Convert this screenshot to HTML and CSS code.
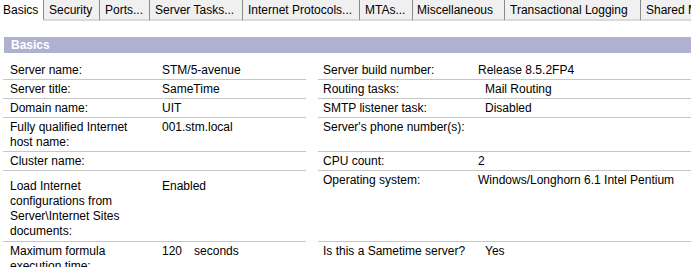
FILE: index.html
```html
<!DOCTYPE html>
<html lang="en">
<head>
    <meta charset="UTF-8">
    <title>Server Document</title>
    <link rel="stylesheet" href="styles.css">
</head>
<body>
    <div class="tabs">
        <div class="tab active tab-basics">Basics</div>
        <div class="tab tab-security">Security</div>
        <div class="tab tab-ports">Ports...</div>
        <div class="tab tab-tasks">Server Tasks...</div>
        <div class="tab tab-protocols">Internet Protocols...</div>
        <div class="tab tab-mtas">MTAs...</div>
        <div class="tab tab-misc">Miscellaneous</div>
        <div class="tab tab-logging">Transactional Logging</div>
        <div class="tab tab-shared">Shared Mail</div>
    </div>

    <div class="section-title">Basics</div>

    <div class="fields">
        <div class="row">
            <div class="half left">
                <div class="label">Server name:</div>
                <div class="value">STM/5-avenue</div>
            </div>
            <div class="half right">
                <div class="label">Server build number:</div>
                <div class="value">Release 8.5.2FP4</div>
            </div>
        </div>
        <div class="row">
            <div class="half left">
                <div class="label">Server title:</div>
                <div class="value">SameTime</div>
            </div>
            <div class="half right">
                <div class="label">Routing tasks:</div>
                <div class="value indent">Mail Routing</div>
            </div>
        </div>
        <div class="row">
            <div class="half left">
                <div class="label">Domain name:</div>
                <div class="value">UIT</div>
            </div>
            <div class="half right">
                <div class="label">SMTP listener task:</div>
                <div class="value indent">Disabled</div>
            </div>
        </div>
        <div class="row">
            <div class="half left">
                <div class="label">Fully qualified Internet host name:</div>
                <div class="value">001.stm.local</div>
            </div>
            <div class="half right">
                <div class="label">Server's phone number(s):</div>
                <div class="value"></div>
            </div>
        </div>
        <div class="row">
            <div class="half left">
                <div class="label">Cluster name:</div>
                <div class="value"></div>
            </div>
            <div class="half right">
                <div class="label">CPU count:</div>
                <div class="value">2</div>
            </div>
        </div>
        <div class="row">
            <div class="half left tall">
                <div class="label">Load Internet configurations from Server\Internet Sites documents:</div>
                <div class="value">Enabled</div>
            </div>
            <div class="half right">
                <div class="label">Operating system:</div>
                <div class="value">Windows/Longhorn 6.1 Intel Pentium</div>
            </div>
        </div>
        <div class="row">
            <div class="half left">
                <div class="label">Maximum formula execution time:</div>
                <div class="value"><span class="number">120</span>seconds</div>
            </div>
            <div class="half right">
                <div class="label">Is this a Sametime server?</div>
                <div class="value indent">Yes</div>
            </div>
        </div>
    </div>
</body>
</html>
```

FILE: styles.css
```css
* {
    box-sizing: border-box;
}

body {
    margin: 0;
    font-family: "Liberation Sans", Arial, sans-serif;
    font-size: 12px;
    color: #000;
    background-color: #fff;
    overflow: hidden;
}

/* tab strip */
.tabs {
    display: flex;
    height: 21px;
    white-space: nowrap;
    overflow: hidden;
}

.tab {
    flex: none;
    height: 21px;
    padding: 1px 0 0 5px;
    line-height: 18px;
    background-color: #f0f0f0;
    border-right: 1px solid #8a8a8a;
    border-bottom: 2px solid #dadada;
    overflow: hidden;
}

.tab.active {
    background-color: #fff;
    border-bottom-color: #fff;
    padding-left: 3px;
}

.tab-basics { width: 44px; }
.tab-security { width: 56px; }
.tab-ports { width: 50px; }
.tab-tasks { width: 93px; }
.tab-protocols { width: 117px; }
.tab-mtas { width: 53px; }
.tab-misc { width: 92px; padding-left: 4px; }
.tab-logging { width: 136px; }
.tab-shared { width: 60px; border-right: none; }

/* section header */
.section-title {
    margin: 16px 0 0 4px;
    height: 16px;
    padding-left: 7px;
    line-height: 16px;
    font-weight: bold;
    color: #fff;
    background-color: #b0b1d1;
}

/* field rows */
.fields {
    margin: 8px 0 0 3px;
}

.row {
    display: grid;
    grid-template-columns: 303px 1fr;
    column-gap: 12px;
}

.half {
    display: grid;
    padding: 2px 0 1px;
    line-height: 15px;
    border-bottom: 1px solid #c6c6c6;
}

.half.left {
    grid-template-columns: 159px 1fr;
}

.half.right {
    grid-template-columns: 160px 1fr;
}

.half.tall {
    padding: 8px 0 2px;
}

.left .label {
    padding: 0 12px 0 7px;
}

.right .label {
    padding: 0 4px 0 5px;
}

.value.indent {
    padding-left: 7px;
}

.number {
    margin-right: 12px;
}
```
